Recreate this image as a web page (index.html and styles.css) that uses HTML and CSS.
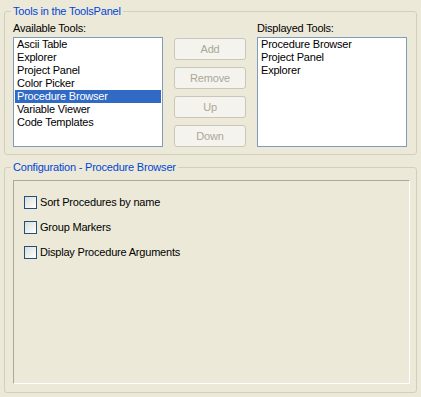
FILE: index.html
```html
<!DOCTYPE html>
<html lang="en">

<head>
    <meta charset="UTF-8">
    <title>Tools Panel Preferences</title>
    <link rel="stylesheet" href="styles.css">
</head>

<body>
    <div class="page">
        <fieldset class="group tools-group">
            <legend>Tools in the ToolsPanel</legend>
            <div class="tools-row">
                <div class="column">
                    <div class="caption">Available Tools:</div>
                    <ul class="listbox">
                        <li>Ascii Table</li>
                        <li>Explorer</li>
                        <li>Project Panel</li>
                        <li>Color Picker</li>
                        <li class="selected">Procedure Browser</li>
                        <li>Variable Viewer</li>
                        <li>Code Templates</li>
                    </ul>
                </div>
                <div class="buttons">
                    <button type="button" disabled>Add</button>
                    <button type="button" disabled>Remove</button>
                    <button type="button" disabled>Up</button>
                    <button type="button" disabled>Down</button>
                </div>
                <div class="column">
                    <div class="caption">Displayed Tools:</div>
                    <ul class="listbox">
                        <li>Procedure Browser</li>
                        <li>Project Panel</li>
                        <li>Explorer</li>
                    </ul>
                </div>
            </div>
        </fieldset>

        <fieldset class="group config-group">
            <legend>Configuration - Procedure Browser</legend>
            <div class="config-panel">
                <label class="check"><span class="box"></span>Sort Procedures by name</label>
                <label class="check"><span class="box"></span>Group Markers</label>
                <label class="check"><span class="box"></span>Display Procedure Arguments</label>
            </div>
        </fieldset>
    </div>
</body>

</html>
```

FILE: styles.css
```css
html,
body {
    margin: 0;
    height: 100%;
}

body {
    background-color: #ece9d8;
    color: #000;
    font-family: "Liberation Sans", Arial, sans-serif;
    font-size: 11px;
    line-height: 13px;
    letter-spacing: -0.2px;
}

.page {
    display: flex;
    flex-direction: column;
    gap: 6px;
    height: 100%;
    box-sizing: border-box;
    padding: 5px 4px 4px 4px;
}

.group {
    margin: 0;
    border: 1px solid #d0d0bf;
    border-radius: 3px;
    padding: 0 8px 7px 8px;
    min-width: 0;
}

.group legend {
    color: #0046d5;
    padding: 0 2px;
    margin-left: -2px;
}

.tools-row {
    display: flex;
    gap: 11px;
    padding-top: 4px;
}

.column {
    display: flex;
    flex-direction: column;
    gap: 2px;
}

.listbox {
    list-style: none;
    margin: 0;
    padding: 0 1px;
    width: 146px;
    height: 108px;
    background: #fff;
    border: 1px solid #7f9db9;
}

.listbox li {
    padding-left: 2px;
    height: 13px;
    white-space: nowrap;
}

.listbox li.selected {
    background-color: #316ac5;
    color: #fff;
}

.buttons {
    display: flex;
    flex-direction: column;
    gap: 7px;
    padding-top: 16px;
}

.buttons button {
    width: 72px;
    height: 22px;
    padding: 0;
    font-family: inherit;
    font-size: 11px;
    letter-spacing: inherit;
    color: #aca899;
    background-color: #f4f3ee;
    border: 1px solid #c9c7ba;
    border-radius: 3px;
}

.config-group {
    flex: 1;
    display: flex;
    flex-direction: column;
    padding: 6px 6px 8px 8px;
}

.config-panel {
    flex: 1;
    display: flex;
    flex-direction: column;
    gap: 12px;
    padding: 15px 10px;
    border-top: 1px solid #aca899;
    border-left: 1px solid #aca899;
    border-right: 1px solid #fff;
    border-bottom: 1px solid #fff;
}

.check {
    display: flex;
    align-items: center;
    gap: 3px;
    height: 13px;
}

.box {
    width: 11px;
    height: 11px;
    border: 1px solid #1c5180;
    background: linear-gradient(135deg, #dcdcd7, #fff);
}
```
